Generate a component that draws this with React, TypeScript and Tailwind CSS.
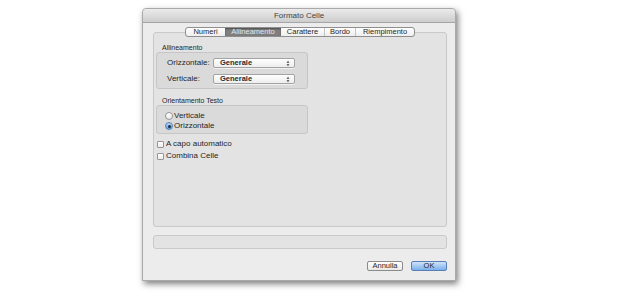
import React from "react";

const font = { fontFamily: '"Lucida Grande", "Liberation Sans", Arial, sans-serif' };

const tabs = [
  { label: "Numeri", w: "w-[39px]" },
  { label: "Allineamento", w: "w-[56px]", active: true },
  { label: "Carattere", w: "w-[43px]" },
  { label: "Bordo", w: "w-[31px]" },
  { label: "Riempimento", w: "w-[59px]" },
];

const Arrows = () => (
  <svg width="4" height="7" viewBox="0 0 4 7" className="ml-auto mr-[4px]">
    <path d="M0.5 3 L2 0.5 L3.5 3 Z" fill="#6a6a6a" />
    <path d="M0.5 4 L2 6.5 L3.5 4 Z" fill="#6a6a6a" />
  </svg>
);

const Popup: React.FC<{ value: string }> = ({ value }) => (
  <div className="flex items-center w-[82px] h-[10px] rounded-[2px] border border-[#a3a3a3] bg-gradient-to-b from-white to-[#ededed] shadow-[0_1px_0_rgba(255,255,255,0.6)]">
    <span className="pl-[6px] text-[7.5px] font-bold leading-none text-[#2a2a2a]">
      {value}
    </span>
    <Arrows />
  </div>
);

const Radio: React.FC<{ label: string; checked?: boolean }> = ({ label, checked }) => (
  <div className="flex items-center h-[10px]">
    {checked ? (
      <div className="w-[8px] h-[8px] rounded-full border border-[#5780b3] bg-gradient-to-b from-[#b9d8f7] to-[#5a9ce2] flex items-center justify-center">
        <div className="w-[3px] h-[3px] rounded-full bg-[#1d2a3a]" />
      </div>
    ) : (
      <div className="w-[8px] h-[8px] rounded-full border border-[#959595] bg-gradient-to-b from-white to-[#e8e8e8]" />
    )}
    <span className="ml-[1px] text-[8px] leading-none text-[#262626]">{label}</span>
  </div>
);

const Check: React.FC<{ label: string }> = ({ label }) => (
  <div className="flex items-center h-[10px]">
    <div className="w-[7px] h-[7px] rounded-[1px] border border-[#959595] bg-gradient-to-b from-white to-[#ebebeb]" />
    <span className="ml-[2px] text-[8px] leading-none text-[#262626]">{label}</span>
  </div>
);

export default function App() {
  return (
    <div className="w-[624px] h-[292px] bg-white pt-[8px] pl-[142px]" style={font}>
      <div className="w-[314px] flex flex-col bg-[#ececec] rounded-t-[4px] border border-[#a9a9a9] shadow-[2px_3px_6px_rgba(0,0,0,0.5)]">
        {/* title bar */}
        <div className="h-[14px] flex items-center justify-center rounded-t-[4px] bg-gradient-to-b from-[#ebebeb] to-[#cdcdcd] border-b border-[#a6a6a6]">
          <span className="text-[8px] leading-none text-[#444444]">Formato Celle</span>
        </div>

        <div className="flex flex-col pt-[4px] pl-[10px] pr-[8px] pb-[9px]">
          {/* tabs */}
          <div className="relative z-10 flex justify-center">
            <div className="flex h-[10px] rounded-[3px] border border-[#8e8e8e] bg-gradient-to-b from-white to-[#eeeeee] overflow-hidden">
              {tabs.map((t, i) => (
                <div
                  key={t.label}
                  className={`${t.w} flex items-center justify-center text-[7.5px] leading-none ${
                    t.active
                      ? "bg-[#7f7f7f] text-[#e6e6e6] shadow-[inset_0_1px_2px_rgba(0,0,0,0.4)]"
                      : "text-[#262626]"
                  } ${i > 0 && !t.active && !tabs[i - 1].active ? "border-l border-[#c4c4c4]" : ""}`}
                >
                  {t.label}
                </div>
              ))}
            </div>
          </div>

          {/* tab content box */}
          <div className="-mt-[5px] h-[195px] rounded-[3px] border border-[#c9c9c9] bg-[#e3e3e3] pt-[10px] pl-[2px] flex flex-col">
            <div className="pl-[6px] h-[9px] text-[7px] leading-none text-[#262626] flex items-center">
              Allineamento
            </div>
            <div className="w-[152px] h-[37px] rounded-[3px] border border-[#c6c6c6] bg-[#dadada] pl-[10px] pt-[5px] flex flex-col gap-[6px]">
              <div className="flex items-center h-[10px]">
                <span className="w-[46px] text-[8px] leading-none text-[#262626]">Orizzontale:</span>
                <Popup value="Generale" />
              </div>
              <div className="flex items-center h-[10px]">
                <span className="w-[46px] text-[8px] leading-none text-[#262626]">Verticale:</span>
                <Popup value="Generale" />
              </div>
            </div>

            <div className="mt-[7px] pl-[6px] h-[9px] text-[7px] leading-none text-[#262626] flex items-center">
              Orientamento Testo
            </div>
            <div className="w-[152px] h-[29px] rounded-[3px] border border-[#c6c6c6] bg-[#dadada] pl-[8px] pt-[5px] flex flex-col">
              <Radio label="Verticale" />
              <Radio label="Orizzontale" checked />
            </div>

            <div className="mt-[5px] pl-[1px] flex flex-col gap-[2px]">
              <Check label="A capo automatico" />
              <Check label="Combina Celle" />
            </div>
          </div>

          {/* status strip */}
          <div className="mt-[8px] h-[14px] rounded-[3px] border border-[#c9c9c9] bg-[#e3e3e3]" />

          {/* buttons */}
          <div className="mt-[12px] flex justify-end gap-[8px]">
            <button className="w-[36px] h-[10px] rounded-[2px] border border-[#8b8b8b] bg-gradient-to-b from-white to-[#e8e8e8] text-[7.5px] leading-none text-[#262626] flex items-center justify-center">
              Annulla
            </button>
            <button className="w-[36px] h-[10px] rounded-[2px] border border-[#5a7fb6] bg-gradient-to-b from-[#cfe3f8] to-[#79b0ea] text-[7.5px] leading-none text-[#262626] flex items-center justify-center">
              OK
            </button>
          </div>
        </div>
      </div>
    </div>
  );
}
